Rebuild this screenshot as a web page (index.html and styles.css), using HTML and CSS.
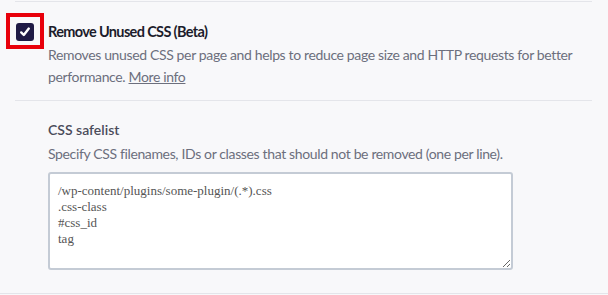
FILE: index.html
```html
<!DOCTYPE html>
<html lang="en">
<head>
    <meta charset="UTF-8">
    <meta name="viewport" content="width=device-width, initial-scale=1.0">
    <title>Remove Unused CSS</title>
    <link rel="stylesheet" href="styles.css">
</head>
<body>
    <div class="settings">
        <div class="option">
            <div class="option-check">
                <span class="checkbox">
                    <svg width="12" height="12" viewBox="0 0 12 12"><path d="M2.2 6.4 L4.8 9 L9.8 2.6" fill="none" stroke="#fff" stroke-width="2.4" stroke-linecap="round" stroke-linejoin="round"/></svg>
                </span>
                <span class="highlight"></span>
            </div>
            <div class="option-text">
                <div class="option-title">Remove Unused CSS (Beta)</div>
                <p class="option-desc">Removes unused CSS per page and helps to reduce page size and HTTP requests for better performance. <a href="#">More info</a></p>
            </div>
        </div>

        <div class="sub-option">
            <div class="sub-title">CSS safelist</div>
            <p class="option-desc">Specify CSS filenames, IDs or classes that should not be removed (one per line).</p>
            <textarea class="safelist">/wp-content/plugins/some-plugin/(.*).css
.css-class
#css_id
tag</textarea>
        </div>
    </div>
</body>
</html>
```

FILE: styles.css
```css
* {
    margin: 0;
    padding: 0;
    box-sizing: border-box;
}

body {
    font-family: 'Segoe UI', Lato, sans-serif;
    background: #f8f8fa;
    padding-top: 1px;
    height: 295px;
    overflow: hidden;
}

.settings {
    border-bottom: 1px solid #e4e5ea;
    height: 293px;
}

.option {
    margin: 0 16px 0 15px;
    border-top: 1px solid #e4e5ea;
    border-bottom: 1px solid #e4e5ea;
    display: flex;
    padding: 20px 0 17px 1px;
    height: 100px;
}

.option-check {
    position: relative;
    width: 32px;
    flex-shrink: 0;
}

.checkbox {
    display: flex;
    align-items: center;
    justify-content: center;
    width: 18px;
    height: 18px;
    margin-top: 1px;
    background: #1f1a45;
    border-radius: 3px;
}

.highlight {
    position: absolute;
    left: -10px;
    top: -9px;
    width: 38px;
    height: 36px;
    border: 4px solid #e8000b;
}

.option-title {
    font-size: 14.5px;
    font-weight: 700;
    color: #1c1c2b;
    line-height: 20px;
    letter-spacing: -0.65px;
}

.option-desc {
    font-size: 14px;
    color: #6c6f7d;
    line-height: 22px;
    margin-top: 2px;
    letter-spacing: -0.36px;
}

.option-desc a {
    color: #6c6f7d;
}

.sub-option {
    padding: 19px 0 0 48px;
}

.sub-title {
    font-size: 14px;
    font-weight: 600;
    color: #4b4c5a;
    line-height: 20px;
}

.sub-option .option-desc {
    margin-top: 3px;
}

.safelist {
    display: block;
    margin-top: 7px;
    width: 465px;
    height: 98px;
    border: 2px solid #c4cbd5;
    border-radius: 3px;
    background: #fff;
    padding: 9px 8px 6px;
    font-family: 'Liberation Serif', serif;
    font-size: 13px;
    line-height: 16px;
    color: #555;
    resize: vertical;
}
```
